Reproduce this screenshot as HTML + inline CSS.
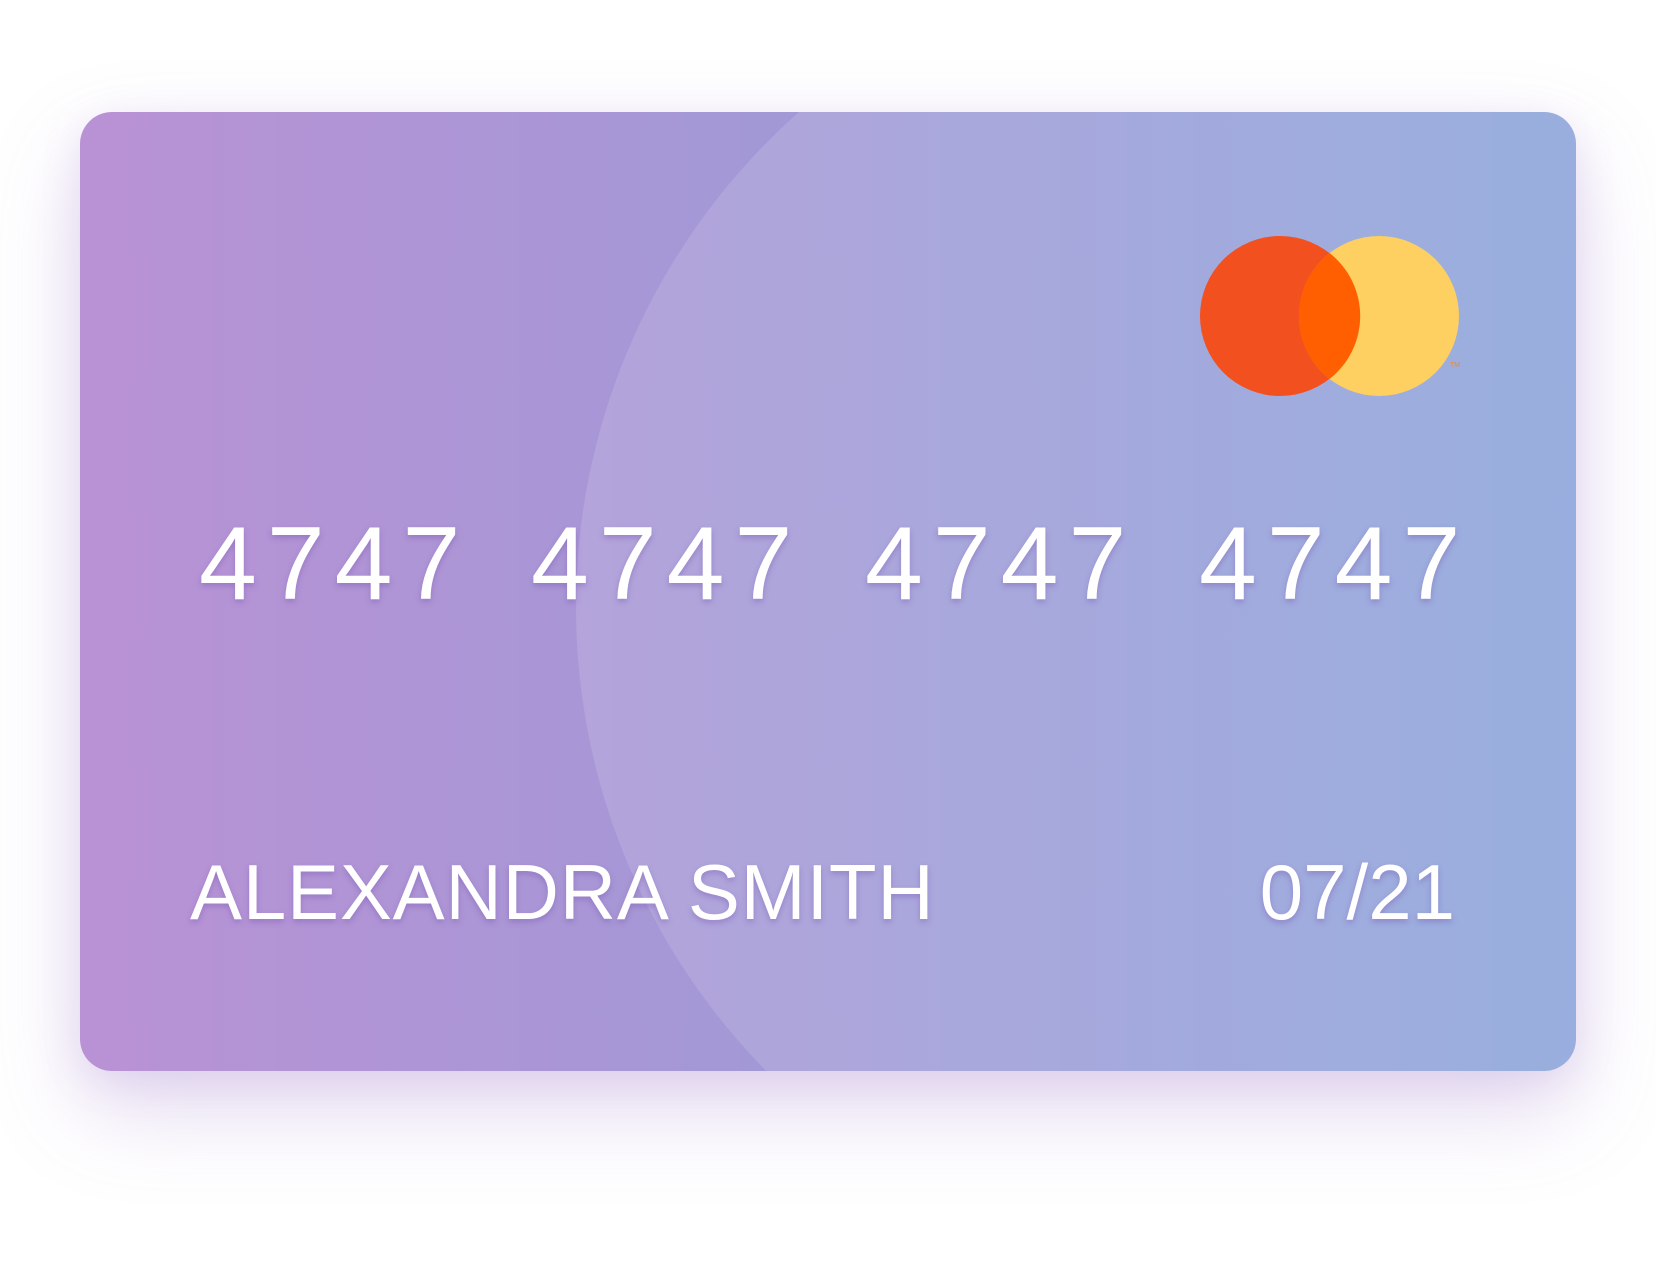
<!DOCTYPE html>
<html><head><meta charset="utf-8"><style>
html,body{margin:0;padding:0;width:1656px;height:1280px;background:#fff;overflow:hidden;}
.card{position:absolute;left:80px;top:112px;width:1496px;height:959px;border-radius:32px;overflow:hidden;
background:linear-gradient(90deg,#b992d5 0%,#a398d6 45%,#8aa3da 100%);
box-shadow:0 40px 90px rgba(150,110,200,0.25),0 10px 40px rgba(150,110,200,0.15);}
.t{position:absolute;color:#fff;font-family:"Liberation Sans",sans-serif;white-space:nowrap;
text-shadow:0 3px 6px rgba(110,70,170,0.35);}
.num{font-size:104px;letter-spacing:10px;line-height:1;}
.nm{font-size:78px;line-height:1;}
</style></head><body>
<div class="card">
<svg width="1496" height="959" style="position:absolute;left:0;top:0">
<circle cx="1157" cy="495" r="661" fill="#ffffff" fill-opacity="0.13"/>
<circle cx="1200" cy="204" r="80" fill="#f3501f"/>
<circle cx="1299" cy="204" r="80" fill="#fed061"/>
<path d="M1249.5 141 A80 80 0 0 1 1249.5 267 A80 80 0 0 1 1249.5 141Z" fill="#ff5f00"/>
<text x="1370" y="255" font-size="7" fill="#e98a3a" font-family="Liberation Sans">TM</text>
</svg>
<div class="t num" style="left:119px;top:400px">4747</div>
<div class="t num" style="left:451px;top:400px">4747</div>
<div class="t num" style="left:785px;top:400px">4747</div>
<div class="t num" style="left:1119px;top:400px">4747</div>
<div class="t nm" style="left:110px;top:741px;letter-spacing:0.8px">ALEXANDRA SMITH</div>
<div class="t nm" style="right:121px;top:741px">07/21</div>
</div>
</body></html>
